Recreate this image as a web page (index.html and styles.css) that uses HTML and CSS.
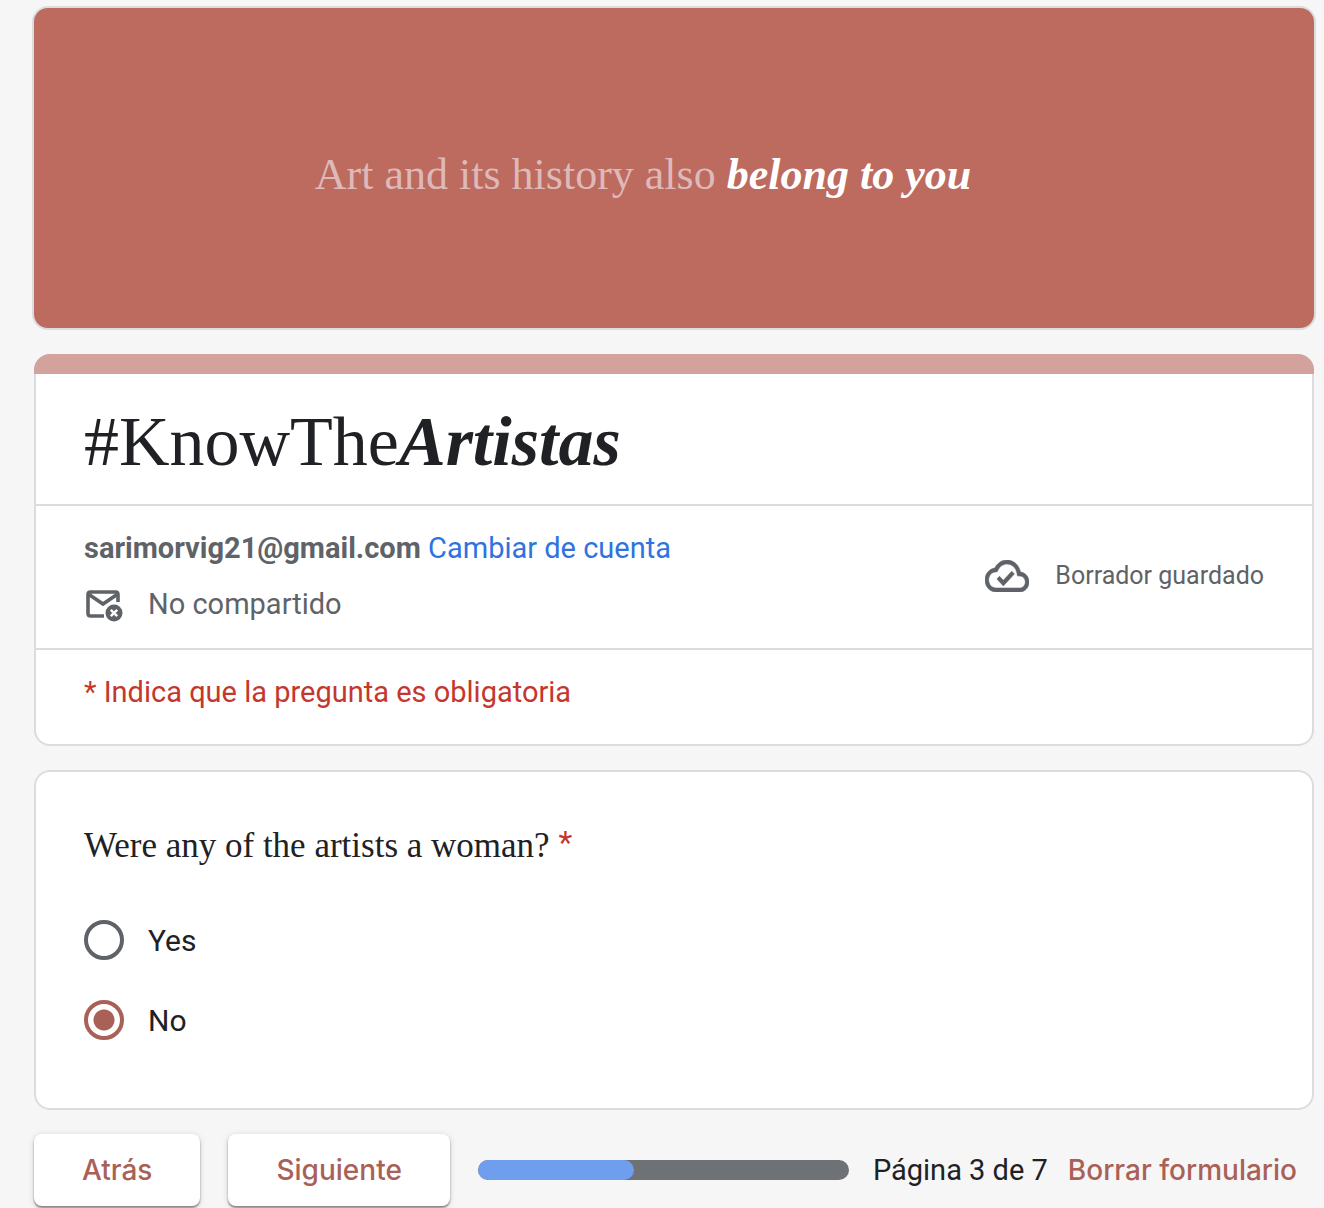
FILE: index.html
```html
<!DOCTYPE html>
<html lang="es">
<head>
    <meta charset="UTF-8">
    <meta name="viewport" content="width=device-width, initial-scale=1.0">
    <title>#KnowTheArtistas</title>
    <link rel="stylesheet" href="styles.css">
</head>
<body>
    <main class="page">
        <div class="banner">
            <p class="banner-text">Art and its history also <em>belong to you</em></p>
        </div>

        <form class="form">
            <section class="card header-card">
                <h1 class="title">#KnowThe<em>Artistas</em></h1>

                <div class="account">
                    <div class="account-info">
                        <p><strong>sarimorvig21@gmail.com</strong> <a href="#">Cambiar de cuenta</a></p>
                        <p class="shared">
                            <svg class="icon-mail" viewBox="0 0 40 40" aria-hidden="true">
                                <path d="M20 32H6.500Q4 32 4 29.500V10.500Q4 8 6.500 8H31.500Q34 8 34 10.500V18" fill="none" stroke="#5f6368" stroke-width="3.600"/>
                                <path d="M5 10.500L19 20L33 10.500" fill="none" stroke="#5f6368" stroke-width="3.600"/>
                                <circle cx="30" cy="29" r="10" fill="#fff"/>
                                <circle cx="30" cy="29" r="8.500" fill="#5f6368"/>
                                <path d="M26.800 25.800L33.200 32.200M33.200 25.800L26.800 32.200" stroke="#fff" stroke-width="2.400"/>
                            </svg>
                            <span>No compartido</span>
                        </p>
                    </div>
                    <div class="draft">
                        <svg class="icon-cloud" viewBox="0 4 24 16" preserveAspectRatio="none" aria-hidden="true">
                            <path d="M19.350 10.040C18.670 6.590 15.640 4 12 4 9.110 4 6.600 5.640 5.350 8.040 2.340 8.360 0 10.910 0 14c0 3.310 2.690 6 6 6h13c2.760 0 5-2.240 5-5 0-2.640-2.050-4.780-4.650-4.960zM19 18H6c-2.210 0-4-1.790-4-4 0-2.050 1.530-3.760 3.560-3.970l1.070-.11.5-.95C8.080 7.140 9.940 6 12 6c2.620 0 4.880 1.860 5.390 4.430l.3 1.500 1.530.11c1.560.1 2.780 1.410 2.780 2.960 0 1.650-1.350 3-3 3zm-9-3.820l-2.090-2.090L6.500 13.500 10 17l6.010-6.010-1.410-1.410z" fill="#5f6368" stroke="#5f6368" stroke-width=".3"/>
                        </svg>
                        <span>Borrador guardado</span>
                    </div>
                </div>

                <p class="required-note">* Indica que la pregunta es obligatoria</p>
            </section>

            <fieldset class="card question">
                <legend class="question-title">Were any of the artists a woman? <span class="star">*</span></legend>
                <label class="option" for="optYes">
                    <input type="radio" id="optYes" name="woman" value="Yes">
                    <span>Yes</span>
                </label>
                <label class="option" for="optNo">
                    <input type="radio" id="optNo" name="woman" value="No" checked>
                    <span>No</span>
                </label>
            </fieldset>

            <div class="actions">
                <button type="button" class="btn">Atrás</button>
                <button type="submit" class="btn">Siguiente</button>
                <div class="progress" role="progressbar" aria-label="Página 3 de 7" aria-valuenow="3" aria-valuemin="0" aria-valuemax="7">
                    <div class="progress-fill" style="width: 42%"></div>
                </div>
                <span class="page-count">Página 3 de 7</span>
                <button type="reset" class="clear-btn">Borrar formulario</button>
            </div>
        </form>
    </main>
</body>
</html>
```

FILE: styles.css
```css
* {
    margin: 0;
    padding: 0;
    box-sizing: border-box;
}

body {
    font-family: Roboto, Arial, sans-serif;
    background: #f6f6f6;
    color: #202124;
}

.page {
    padding: 8px 10px 2px 34px;
}

.banner {
    height: 320px;
    margin-bottom: 26px;
    padding: 12px 62px 0 0;
    background: #bd6a5f;
    border-radius: 14px;
    box-shadow: 0 0 0 2px #dadce0;
    display: flex;
    align-items: center;
    justify-content: center;
}

.banner-text {
    font-family: 'Liberation Serif', serif;
    font-size: 44px;
    color: #ddb9b9;
}

.banner-text em {
    color: white;
    font-weight: bold;
}

.card {
    background: white;
    border: 2px solid #dadce0;
    border-radius: 16px;
    margin-bottom: 24px;
}

.header-card {
    border-top: 0;
    position: relative;
    padding-top: 20px;
}

.header-card::before {
    content: '';
    position: absolute;
    top: 0;
    left: -2px;
    right: -2px;
    height: 20px;
    background: #d3a29d;
    border-radius: 16px 16px 0 0;
}

.title {
    padding: 28px 48px 22px;
    font-family: 'Liberation Serif', serif;
    font-size: 70px;
    font-weight: normal;
    line-height: 80px;
}

.title em {
    font-weight: bold;
}

.account {
    display: flex;
    align-items: center;
    justify-content: space-between;
    padding: 20px 48px 22px;
    border-top: 2px solid #dadce0;
    border-bottom: 2px solid #dadce0;
    color: #5f6368;
    font-size: 29px;
    line-height: 44px;
}

.account a {
    color: #2f73e0;
    text-decoration: none;
}

.shared {
    display: flex;
    align-items: center;
    gap: 24px;
    margin-top: 12px;
}

.icon-mail {
    width: 40px;
    height: 40px;
}

.draft {
    display: flex;
    align-items: center;
    gap: 26px;
    font-size: 25px;
}

.icon-cloud {
    width: 44px;
    height: 32px;
}

.required-note {
    padding: 20px 48px 30px;
    color: #c5372c;
    font-size: 29px;
    line-height: 44px;
}

.question {
    padding: 48px 48px 28px;
}

.question-title {
    float: left;
    width: 100%;
    margin-bottom: 48px;
    font-family: 'Liberation Serif', serif;
    font-size: 35px;
    line-height: 52px;
}

.star {
    color: #c5372c;
    font-family: Roboto, Arial, sans-serif;
    font-size: 32px;
    line-height: 32px;
    vertical-align: 4px;
}

.option {
    clear: both;
    display: flex;
    align-items: center;
    gap: 24px;
    height: 40px;
    margin-bottom: 40px;
    font-size: 30px;
    cursor: pointer;
}

.option input {
    appearance: none;
    width: 40px;
    height: 40px;
    border: 4px solid #5f6368;
    border-radius: 50%;
}

.option input:checked {
    border-color: #a96157;
    background: radial-gradient(circle, #a96157 10px, white 11px);
}

.actions {
    display: flex;
    align-items: center;
    gap: 28px;
    padding-right: 17px;
}

.btn {
    height: 72px;
    padding: 0 48px;
    background: white;
    border: none;
    border-radius: 8px;
    box-shadow: 0 2px 2px rgba(0, 0, 0, 0.4), 0 1px 6px rgba(0, 0, 0, 0.15);
    color: #a96157;
    font-family: Inter, Roboto, sans-serif;
    font-size: 28px;
    font-weight: 500;
    cursor: pointer;
}

.progress {
    flex: 1;
    height: 20px;
    background: #6e7175;
    border-radius: 10px;
    overflow: hidden;
}

.progress-fill {
    height: 100%;
    background: #6f9eee;
    border-radius: 10px;
}

.page-count {
    margin-left: -4px;
    font-size: 29px;
}

.clear-btn {
    margin-left: -8px;
    background: none;
    border: none;
    color: #a96157;
    font-family: Inter, Roboto, sans-serif;
    font-size: 28px;
    font-weight: 500;
    cursor: pointer;
}
```
